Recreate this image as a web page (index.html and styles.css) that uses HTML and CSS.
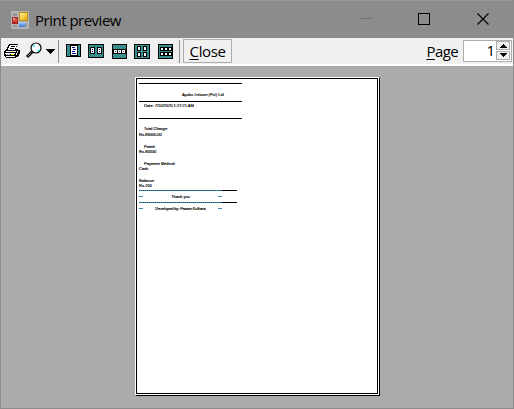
FILE: index.html
```html
<!DOCTYPE html>
<html lang="en">
<head>
<meta charset="utf-8">
<title>Print preview</title>
<link rel="stylesheet" href="styles.css">
</head>
<body>
<div class="window">
  <header class="titlebar">
    <svg class="app-icon" width="18" height="18" viewBox="0 0 18 18">
      <defs>
        <linearGradient id="y" x1="0" y1="0" x2="1" y2="1"><stop offset="0" stop-color="#fff3b0"/><stop offset=".5" stop-color="#f8cf4b"/><stop offset="1" stop-color="#e0a010"/></linearGradient>
        <linearGradient id="b" x1="0" y1="0" x2="0" y2="1"><stop offset="0" stop-color="#a9ccff"/><stop offset="1" stop-color="#3b78e0"/></linearGradient>
      </defs>
      <rect width="18" height="18" rx="1" fill="#b4b4b4"/>
      <path d="M2 2h4v3H2zM2 14h4v2H2zM14 12h2v4h-2z" fill="#989898"/>
      <rect x="8" y="1" width="9" height="9" fill="#c18c12"/><rect x="9" y="2" width="7" height="7" fill="url(#y)"/>
      <rect x="1" y="6" width="6" height="7" fill="#a92424"/><rect x="2" y="7" width="4" height="4" fill="#d94b40"/><path d="M2 7h2v2H2z" fill="#ee9a90"/>
      <rect x="8" y="11" width="6" height="5" fill="url(#b)"/>
    </svg>
    <span class="title">Print preview</span>
    <svg class="controls" width="160" height="38" viewBox="0 0 160 38" shape-rendering="crispEdges">
      <path d="M7 18h12v1H7z" fill="#707070"/>
      <rect x="65.500" y="13.500" width="11" height="11" fill="none" stroke="#000"/>
      <path d="M124.500 13.500l11 11M135.500 13.500l-11 11" stroke="#000" stroke-width="1.100" shape-rendering="auto"/>
    </svg>
  </header>
  <nav class="toolbar">
    <svg class="tools" width="179" height="26" viewBox="1 38 179 26" shape-rendering="crispEdges">
      <defs>
        <pattern id="teal" width="2" height="2" patternUnits="userSpaceOnUse"><rect width="2" height="2" fill="#009090"/><path d="M0 0h1v1H0zM1 1h1v1H1z" fill="#6c8c8c"/></pattern>
      </defs>
      <g transform="translate(4 44)">
        <path d="M5 0h9v1h-1v2h-1v2h2v1h2v4h-1v2h-1v1h-2v1H2v-1H1v-1H0V7h1V6h1V5h1V3h1V1h1z" fill="#000"/>
        <path d="M6 1h7v1h-1v2h-1v2H4V4h1V2h1zM3 7h9v1H2V7zM1 9h10v1H1zM2 12h9v1H2zM13 7h1v1h-1zM12 9h1v2h-1z" fill="#fff"/>
        <path d="M7 2h4v1H7zM6 4h4v1H6z" fill="#000"/>
        <path d="M7 10h3v1H7z" fill="#ff0"/><path d="M2 10h4v1H2zM13 8h1v1h-1z" fill="#c0c0c0"/>
      </g>
      <g shape-rendering="auto">
        <path d="M32.500 51.500l-5.500 5.500" stroke="#000" stroke-width="3"/>
        <path d="M31.500 52.500l-4 4" stroke="#909090" stroke-width="1"/>
        <circle cx="36" cy="48" r="5" fill="#fff" stroke="#000" stroke-width="1.200"/>
        <path d="M33.300 47c.2-1 .7-1.500 1.700-1.700M37.500 51c1 0 1.700-.8 1.800-1.800" fill="none" stroke="#00f0ff" stroke-width="1.300"/>
      </g>
      <path d="M46 49h9v1h-1v1h-1v1h-1v1h-1v1h-1v-1h-1v-1h-1v-1h-1v-1h-1z" fill="#000"/>
      <rect x="58" y="40" width="1" height="23" fill="#8c8c8c"/>
      <rect x="66.500" y="44.500" width="14" height="12" rx="1" fill="url(#teal)" stroke="#000"/>
      <rect x="70.500" y="45.500" width="7" height="10" fill="#fff" stroke="#000"/>
      <path d="M72 47h3v1h-3zM73 49h3v1h-3zM72 51h3v1h-3zM72 53h4v1h-4z" fill="#000090"/>
      <rect x="88.500" y="44.500" width="15" height="13" rx="1" fill="url(#teal)" stroke="#000"/>
      <path d="M90.500 47.500h4v6h-4zM97.500 47.500h4v6h-4z" fill="#fff" stroke="#000"/>
      <path d="M92 49h1v1h-1zM92 51h1v1h-1zM99 49h1v1h-1zM99 51h1v1h-1z" fill="#000090"/>
      <rect x="112.500" y="44.500" width="14" height="14" rx="1" fill="url(#teal)" stroke="#000"/>
      <path d="M113.500 49.500h4v4h-4zM117.500 49.500h4v4h-4zM121.500 49.500h4v4h-4z" fill="#fff" stroke="#000"/>
      <path d="M115 51h1v1h-1zM119 51h1v1h-1zM123 51h1v1h-1z" fill="#606060"/>
      <rect x="134.500" y="44.500" width="15" height="14" rx="1" fill="url(#teal)" stroke="#000"/>
      <path d="M137.500 46.500h3v4h-3zM143.500 46.500h3v4h-3zM137.500 52.500h3v4h-3zM143.500 52.500h3v4h-3z" fill="#fff" stroke="#000"/>
      <rect x="158.500" y="44.500" width="14" height="14" rx="1" fill="url(#teal)" stroke="#000"/>
      <path d="M160.500 47.500h3v3h-3zM164.500 47.500h3v3h-3zM168.500 47.500h3v3h-3zM160.500 52.500h3v3h-3zM164.500 52.500h3v3h-3zM168.500 52.500h3v3h-3z" fill="#fff" stroke="#000"/>
      <rect x="179" y="40" width="1" height="23" fill="#8c8c8c"/>
    </svg>
    <button class="close"><u>C</u>lose</button>
    <label class="page-label"><u>P</u>age</label>
    <div class="spinner"><span class="value">1</span>
      <svg width="15" height="20" viewBox="0 0 15 20" shape-rendering="crispEdges"><path d="M.5.500h13v8H.5zM.5 10.500h13v8H.5z" fill="#f0f0f0" stroke="#acacac"/><path d="M7 3h1v1h1v1h1v1h1v1H4V6h1V5h1V4h1zM4 12h7v1h-1v1H9v1H8v1H7v-1H6v-1H5v-1H4z"/></svg>
    </div>
  </nav>
  <main class="preview">
    <div class="frame">
      <article class="paper">
        <hr class="rule r1">
        <p class="name"><span>Ayubo Leisure (Pvt) Ltd</span></p>
        <hr class="rule r2">
        <p class="indent date"><span>Date: 7/10/2020 1:27:21 AM</span></p>
        <hr class="rule r3">
        <p class="indent total"><span>Total Charge:</span></p>
        <p>Rs.89000.00</p>
        <p class="indent gap">Paied:</p>
        <p>Rs.90000</p>
        <p class="indent gap7">Payment Method:</p>
        <p>Cash</p>
        <p class="gap7">Balance:</p>
        <p>Rs.700</p>
        <div class="dashes d1"></div>
        <p class="footer thanks"><i></i><span>Thank you</span><i></i></p>
        <div class="dashes"></div>
        <p class="footer credit"><i></i><span>Developed by: Pawan Kulhara</span><i></i></p>
      </article>
    </div>
  </main>
</div>
</body>
</html>
```
FILE: styles.css
```css
* { box-sizing: border-box; }
body { margin: 0; font: 15px "Open Sans", sans-serif; color: #000; }
.window { width: 514px; height: 409px; border: 1px solid #8c8c8c; border-top: 0; background: #ababab; display: flex; flex-direction: column; overflow: hidden; }
.titlebar { height: 38px; flex: none; background: #8c8c8c; border-top: 1px solid #999; display: flex; align-items: center; padding-left: 10px; }
.app-icon { margin-top: 1px; }
.title { margin-left: 6px; width: 100px; letter-spacing: -.5px; font-size: 15px; white-space: nowrap; }
.controls { margin-left: auto; width: 160px; margin-top: -1px; }
.toolbar { height: 28px; flex: none; background: #f0f0f0; border-bottom: 2px solid #fff; display: flex; align-items: flex-start; }
.tools { flex: none; }
.close { margin: 1px 0 0 3px; width: 49px; height: 24px; padding: 0; border: 1px solid #acacac; background: #f0f0f0; font: inherit; letter-spacing: -.4px; line-height: 22px; }
u { text-underline-offset: 2px; text-decoration-thickness: 1px; }
.page-label { margin-left: auto; line-height: 26px; letter-spacing: -.6px; }
.spinner { margin: 2px 1px 0 5px; width: 49px; height: 22px; border: 1px solid #acacac; background: #fff; display: flex; }
.value { flex: 1; text-align: right; line-height: 19px; padding-right: 1px; }
.preview { padding: 11px 0 0 134px; }
.frame { width: 245px; height: 319px; background: #fff; border: 1px solid #000; border-left-color: #fff; border-top-color: #fff; padding: 0 1px 1px 0; }
.paper { height: 316px; border: 1px solid #000; padding: 4px 2px; font: 4px/5px "Liberation Sans", sans-serif; background: #fff; -webkit-text-stroke: .15px #000; }
.paper p { margin: 0; height: 5.500px; white-space: nowrap; }
.paper .indent { padding-left: 5px; }
.rule { margin: 0; width: 103px; height: 1px; border: 0; background: #000; }
.paper .name { height: 17px; padding: 8px 0 0 43px; }
.paper .date { height: 16px; padding-top: 1px; }
.paper .total { height: 13px; padding-top: 7px; }
.paper .gap { height: 11.500px; padding-top: 6px; }
.paper .gap7 { height: 11.500px; padding-top: 6px; }
.dashes { width: 98px; height: 1px; background: linear-gradient(90deg, transparent 83px, #000 83px), repeating-linear-gradient(90deg, #105070 0 1px, #4090b0 1px 2px); }
.d1 { margin-top: 1.500px; }
.paper .footer { display: flex; height: 11px; align-items: center; width: 83px; justify-content: space-between; }
.paper .credit { letter-spacing: -.13px; }
.footer i { width: 4px; height: 1px; background: #348aa8; }
```
